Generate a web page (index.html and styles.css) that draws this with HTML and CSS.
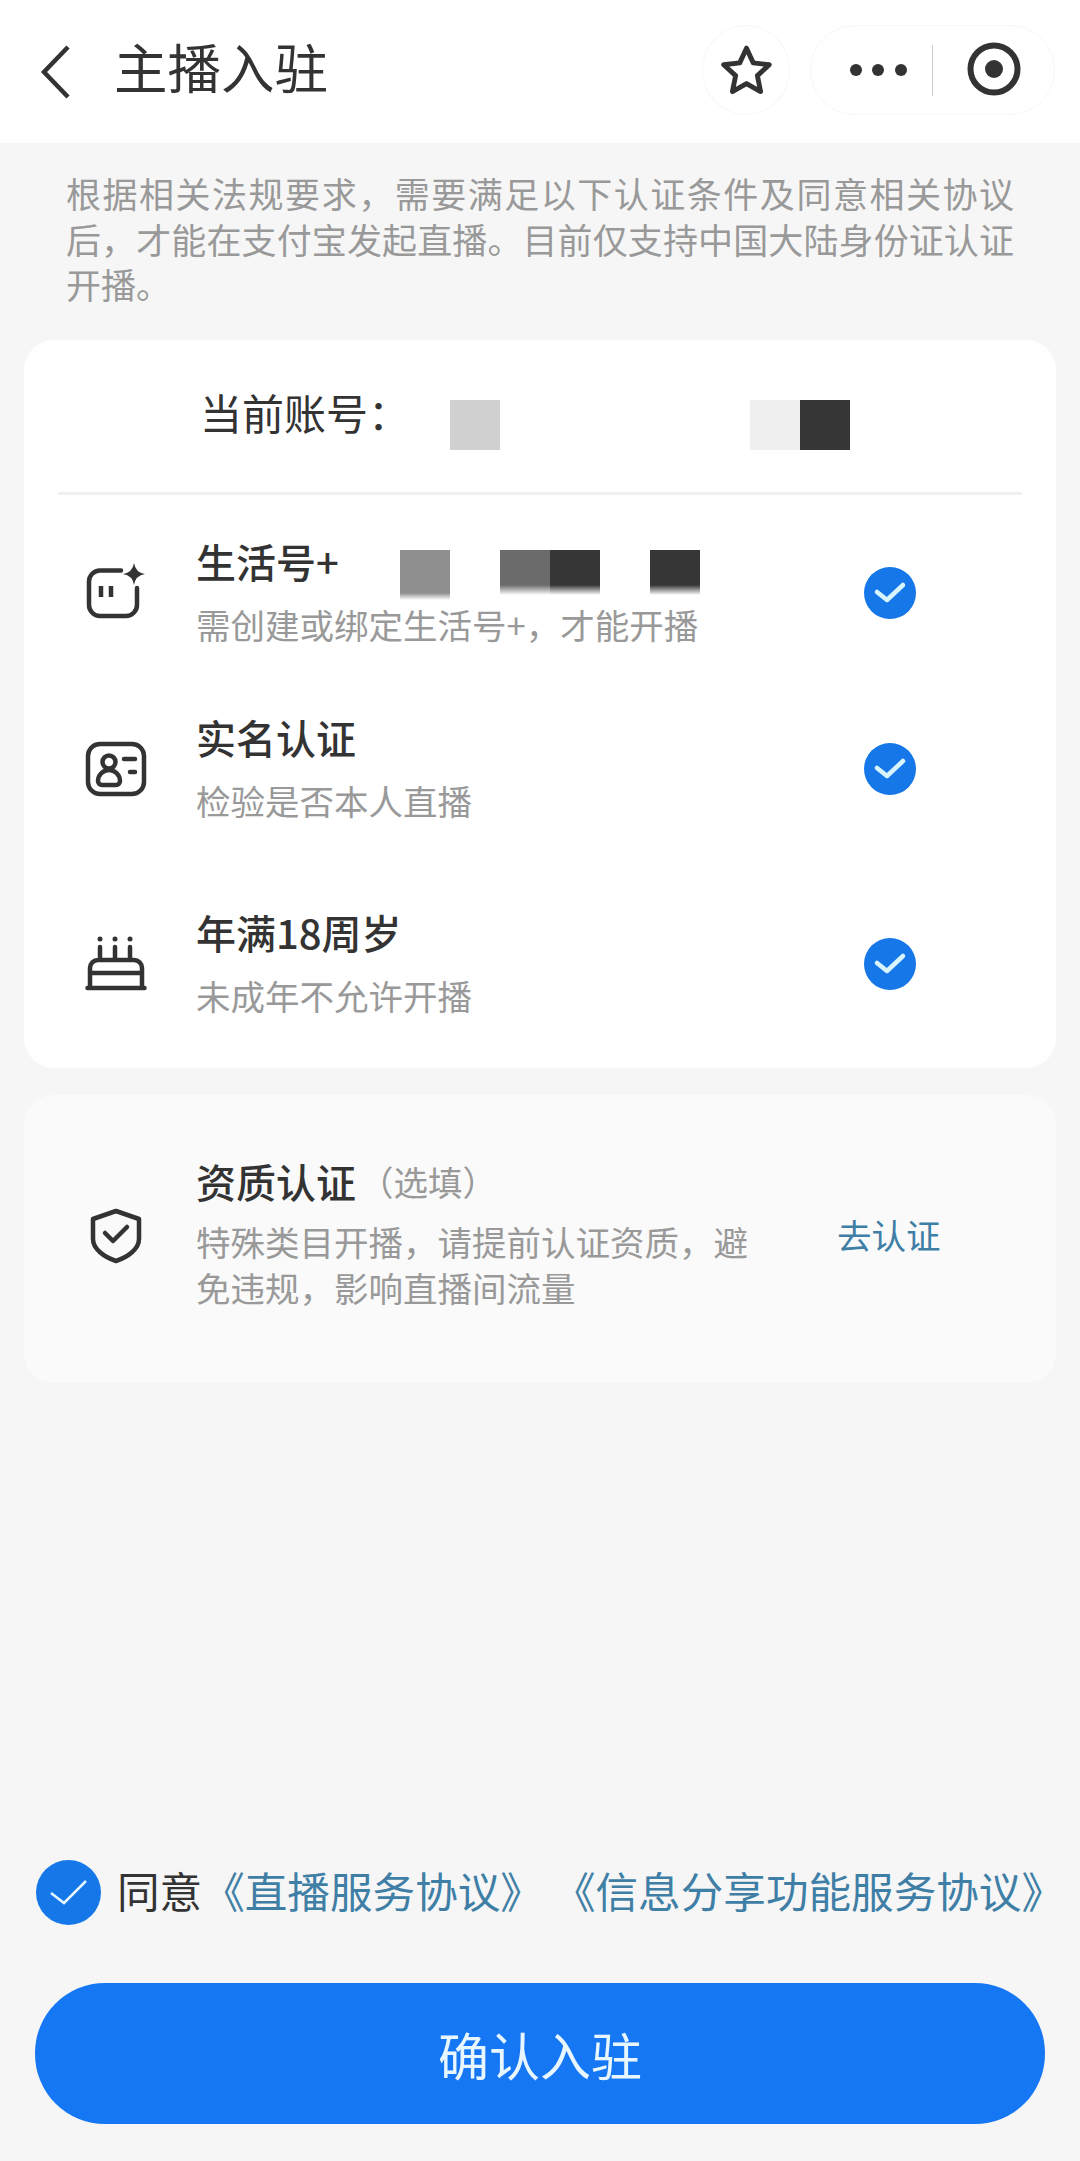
FILE: index.html
```html
<!DOCTYPE html>
<html lang="zh-CN">
<head>
<meta charset="utf-8">
<title>主播入驻</title>
<link rel="stylesheet" href="styles.css">
</head>
<body>
<div class="page">
  <header class="header">
    <svg class="back" viewBox="0 0 40 60" width="40" height="60"><path d="M29 7 L5 32 L29 57"/></svg>
    <h1 class="title">主播入驻</h1>
    <div class="star-btn">
      <svg class="ico" viewBox="0 -3.5 56 56" width="61" height="61"><path d="M28 4 L34.2 17.5 L48.9 19.2 L38 29.2 L40.9 43.8 L28 36.5 L15.1 43.8 L18 29.2 L7.1 19.2 L21.8 17.5 Z"/></svg>
    </div>
    <div class="capsule">
      <svg class="dots" viewBox="0 0 60 12" width="60" height="12"><circle cx="8" cy="6" r="6"/><circle cx="30" cy="6" r="6"/><circle cx="53" cy="6" r="6"/></svg>
      <span class="cap-div"></span>
      <svg class="target" viewBox="0 0 60 60" width="60" height="60"><circle class="ring" cx="30" cy="29" r="23.5"/><circle cx="30" cy="29" r="9"/></svg>
    </div>
  </header>

  <p class="intro">根据相关法规要求，需要满足以下认证条件及同意相关协议后，才能在支付宝发起直播。目前仅支持中国大陆身份证认证开播。</p>

  <section class="card">
    <div class="account">
      <span class="account-label">当前账号：</span>
      <div class="mosaic mosaic-account">
        <i class="cell c-d0"></i><i class="cell"></i><i class="cell"></i><i class="cell"></i><i class="cell"></i><i class="cell"></i><i class="cell c-ef"></i><i class="cell c-36"></i>
      </div>
    </div>
    <div class="divider"></div>

    <div class="row row-first">
      <div class="slot">
        <svg class="ico" viewBox="0 0 64 60" width="64" height="60">
          <path d="M37 8.5 H16 a11 11 0 0 0 -11 11 V43 a11 11 0 0 0 11 11 H42 a11 11 0 0 0 11 -11 V26"/>
          <path class="butt" d="M17 24 V35 M27 24 V35"/>
          <path class="fill" d="M50 1 Q51.5 10.5 61 12 Q51.5 13.5 50 23 Q48.5 13.5 39 12 Q48.5 10.5 50 1Z"/>
        </svg>
      </div>
      <div class="texts">
        <div class="title-line">
          <span class="name name-fixed">生活号+</span>
          <div class="mosaic mosaic-name">
            <i class="cell f-8f"></i><i class="cell"></i><i class="cell f-6b"></i><i class="cell f-36"></i><i class="cell"></i><i class="cell f-36"></i>
          </div>
        </div>
        <div class="sub">需创建或绑定生活号+，才能开播</div>
      </div>
      <svg class="check" viewBox="0 0 52 52" width="52" height="52"><circle cx="26" cy="26" r="26"/><path d="M13 25 L23 33 L39 18"/></svg>
    </div>

    <div class="row row-second">
      <div class="slot">
        <svg class="ico" viewBox="0 0 64 60" width="64" height="60">
          <rect x="4" y="6" width="56" height="50" rx="12"/>
          <circle cx="25" cy="24" r="6.5"/>
          <path d="M18 47 H32 a4 4 0 0 0 4 -4 c0 -6 -5 -11 -11 -11 s-11 5 -11 11 a4 4 0 0 0 4 4Z"/>
          <path d="M40 21 H51 M46 34 H51"/>
        </svg>
      </div>
      <div class="texts">
        <div class="title-line"><span class="name">实名认证</span></div>
        <div class="sub">检验是否本人直播</div>
      </div>
      <svg class="check" viewBox="0 0 52 52" width="52" height="52"><circle cx="26" cy="26" r="26"/><path d="M13 25 L23 33 L39 18"/></svg>
    </div>

    <div class="row row-third">
      <div class="slot">
        <svg class="ico" viewBox="0 0 64 60" width="64" height="60">
          <path d="M6 55 V35 a8 8 0 0 1 8 -8 H50 a8 8 0 0 1 8 8 V55 M6 40 H58 M3.5 55 H60.5 M16 14 V26 M31 14 V26 M46 14 V26"/>
          <circle class="fill" cx="16" cy="6" r="2.5"/><circle class="fill" cx="31" cy="6" r="2.5"/><circle class="fill" cx="46" cy="6" r="2.5"/>
        </svg>
      </div>
      <div class="texts">
        <div class="title-line"><span class="name">年满18周岁</span></div>
        <div class="sub">未成年不允许开播</div>
      </div>
      <svg class="check" viewBox="0 0 52 52" width="52" height="52"><circle cx="26" cy="26" r="26"/><path d="M13 25 L23 33 L39 18"/></svg>
    </div>
  </section>

  <section class="card-soft">
    <div class="row">
      <div class="slot">
        <svg class="ico" viewBox="0 0 64 60" width="64" height="60">
          <path d="M32 5 L55 13 V33 C55 43 44 51 32 55 C20 51 9 43 9 33 V13 Z"/>
          <path d="M21 27 L29 35 L43 21"/>
        </svg>
      </div>
      <div class="texts texts-narrow">
        <div class="title-line"><span class="name">资质认证</span><span class="optional">（选填）</span></div>
        <div class="sub sub-wrap">特殊类目开播，请提前认证资质，避免违规，影响直播间流量</div>
      </div>
      <a class="action">去认证</a>
    </div>
  </section>

  <footer class="footer">
    <div class="agree">
      <svg class="agree-check" viewBox="0 0 65 65" width="65" height="65"><circle cx="32.5" cy="32.5" r="32.5"/><path d="M15 33 L28 43 L50 21"/></svg>
      <span class="agree-text">同意<a class="link">《直播服务协议》</a><a class="link link-next">《信息分享功能服务协议》</a></span>
    </div>
    <button class="confirm">确认入驻</button>
  </footer>
</div>
</body>
</html>
```

FILE: styles.css
```css
* { box-sizing: border-box; }
html, body { margin: 0; padding: 0; }
body {
  background: #f6f6f6;
  color: #333;
  font-family: "Noto Sans CJK SC", "Noto Sans", sans-serif;
  text-spacing-trim: space-all;
}
.page {
  width: 1080px;
  min-height: 2161px;
  display: flex;
  flex-direction: column;
}

/* header */
.header {
  height: 143px;
  background: #fff;
  padding: 25px 25px 28px 0;
  display: flex;
  align-items: center;
}
.back { margin-left: 39px; flex: none; fill: none; stroke: #333; stroke-width: 4.5; }
.title {
  margin: 0 0 9px 35px;
  font-size: 53.5px;
  font-weight: 400;
  line-height: 72px;
  flex: 1;
}
.star-btn {
  width: 88px;
  height: 90px;
  border: 1px solid #f7f7f7;
  border-radius: 50%;
  display: flex;
  align-items: center;
  justify-content: center;
}
.capsule {
  width: 245px;
  height: 90px;
  margin-left: 20px;
  border: 1px solid #f7f7f7;
  border-radius: 45px;
  display: flex;
  align-items: center;
}
.dots { margin-left: 37px; fill: #333; }
.cap-div { width: 1px; height: 51px; margin-left: 24px; background: #ccc; }
.target { margin-left: 31px; fill: #333; }
.target .ring { fill: none; stroke: #333; stroke-width: 6; }

/* generic line icon */
.ico { fill: none; stroke: #333; stroke-width: 4.5; stroke-linecap: round; stroke-linejoin: round; display: block; }
.ico .fill { fill: #333; stroke: none; }
.ico .butt { stroke-linecap: butt; }

/* intro */
.intro {
  margin: 27px 0 33px 66px;
  width: 948px;
  font-size: 35px;
  line-height: 45.5px;
  color: #999;
  text-align: justify;
}

/* main card */
.card {
  margin: 0 24px;
  background: #fff;
  border-radius: 30px;
  padding-bottom: 46px;
}
.account {
  height: 152px;
  display: flex;
  align-items: center;
  padding-left: 176px;
}
.account-label {
  width: 250px;
  font-size: 42px;
  line-height: 50px;
  padding-bottom: 8px;
  height: 58px;
  white-space: nowrap;
}
.mosaic { display: flex; flex: none; }
.mosaic-account { margin-top: 18px; }
.cell { display: block; width: 50px; height: 50px; }
.c-d0 { background: #d0d0d0; }
.c-ef { background: #efefef; }
.c-36 { background: #363636; }
.f-8f { background: linear-gradient(#8f8f8f 86%, #fff 100%); }
.f-6b { background: linear-gradient(#6b6b6b 70%, #fff 90%); }
.f-36 { background: linear-gradient(#363636 70%, #fff 90%); }

.divider { height: 3px; margin: 0 34px; background: #f0f0f0; }

/* rows */
.row { display: flex; align-items: center; padding-left: 60px; }
.row-first { margin-top: 44px; }
.row-second { margin-top: 64px; }
.row-third { margin-top: 83px; }
.slot { width: 64px; flex: none; margin-right: 48px; margin-bottom: 5px; }
.texts { flex: 1; }
.texts-narrow { flex: none; width: 560px; }
.title-line { height: 50px; display: flex; align-items: flex-start; }
.name { font-size: 40px; line-height: 44px; font-weight: 500; }
.name-fixed { width: 204px; flex: none; }
.mosaic-name { margin-top: 11px; }
.optional { font-size: 34.5px; line-height: 44px; color: #999; margin-left: 3px; }
.sub { margin: 10px 0 2px; font-size: 34.5px; line-height: 50px; color: #999; }
.sub-wrap { margin: 9px 0 3px; line-height: 46px; }
.check { flex: none; margin: 0 140px 3px 0; }
.check circle { fill: #1677e8; }
.check path { fill: none; stroke: #d8f4ff; stroke-width: 4.5; stroke-linecap: round; stroke-linejoin: round; }

/* optional card */
.card-soft {
  margin: 27px 24px 0;
  height: 288px;
  background: #fafafa;
  border-radius: 30px;
  display: flex;
  align-items: center;
}
.card-soft .row { width: 100%; margin-top: -6px; }
.card-soft .slot { margin-bottom: 0; }
.action {
  margin: 0 0 4px 81px;
  font-size: 34.5px;
  line-height: 46px;
  color: #3f7fa6;
  white-space: nowrap;
}

/* footer */
.footer { margin-top: auto; padding: 0 35px 37px; }
.agree { height: 66px; display: flex; align-items: center; margin-bottom: 58px; }
.agree-check { flex: none; margin-left: 1px; margin-right: 16px; }
.agree-check circle { fill: #1677e8; }
.agree-check path { fill: none; stroke: #e4f6ff; stroke-width: 2.5; }
.agree-text { font-size: 42.6px; line-height: 62px; padding-bottom: 4px; white-space: nowrap; }
.link { color: #3f7fa6; }
.link-next { margin-left: 10px; }
.confirm {
  display: block;
  width: 1010px;
  height: 141px;
  border: 0;
  border-radius: 70px;
  background: #1677f5;
  color: #e8f6ff;
  font-family: inherit;
  font-size: 51px;
  padding: 0;
}
```
